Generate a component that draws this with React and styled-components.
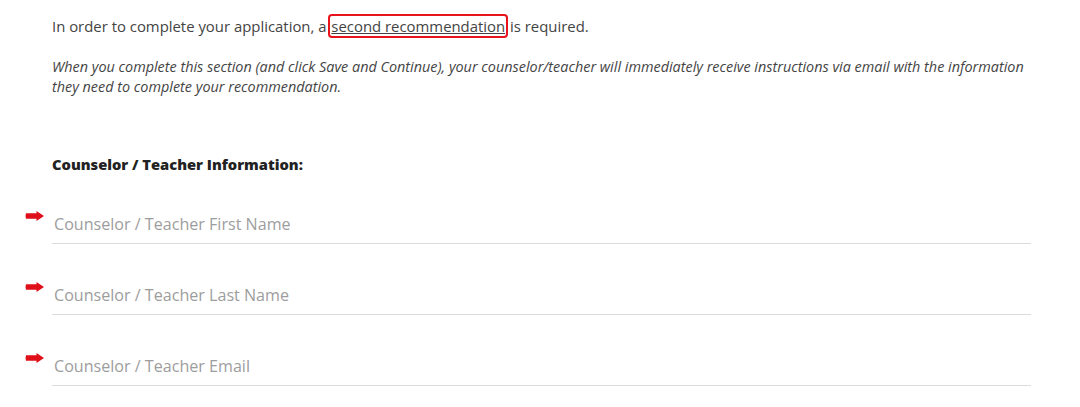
import styled, { createGlobalStyle } from "styled-components";

const GlobalStyle = createGlobalStyle`
  body {
    margin: 0;
    background: #fff;
    font-family: "Open Sans", "Liberation Sans", sans-serif;
    color: #444;
  }
`;

const Page = styled.div`
  padding: 16px 0 0 25px;
  width: 1006px;
`;

const Intro = styled.p`
  margin: 0 0 21px 27px;
  font-size: 14.9px;
  line-height: 20px;
`;

const RecLink = styled.a`
  color: #444;
  text-decoration: underline;
  outline: 2px solid #e8131b;
  outline-offset: 0;
  border-radius: 2px;
  padding: 0 1px;
`;

const Note = styled.p`
  margin: 0 0 57px 27px;
  font-size: 14.4px;
  line-height: 20px;
  font-style: italic;
`;

const Heading = styled.h4`
  margin: 0 0 30px 27px;
  font-size: 14.7px;
  line-height: 20px;
  font-weight: 800;
  color: #222;
`;

const FieldRow = styled.div`
  display: grid;
  grid-template-columns: 27px 1fr;
  margin-bottom: 31px;
`;

const Marker = styled.svg`
  margin-top: 7px;
`;

const Input = styled.input`
  height: 39px;
  border: none;
  border-bottom: 1px solid #dcdcdc;
  padding: 0 2px;
  font-family: inherit;
  font-size: 16.1px;
  font-weight: 400;
  color: #444;
  outline: none;
  &::placeholder {
    color: #9d9d9d;
  }
`;

const fields = [
  "Counselor / Teacher First Name",
  "Counselor / Teacher Last Name",
  "Counselor / Teacher Email",
];

function RequiredArrow() {
  return (
    <Marker width="19" height="10" viewBox="0 0 19 10">
      <path d="M1 2.2 H11.5 V0 L19 5 L11.5 10 V7.8 H1 Q0 5 1 2.2 Z" fill="#e0101a" />
    </Marker>
  );
}

export default function App() {
  return (
    <>
      <GlobalStyle />
      <Page>
        <Intro>
          In order to complete your application, a{" "}
          <RecLink href="#">second recommendation</RecLink> is required.
        </Intro>
        <Note>
          When you complete this section (and click Save and Continue), your
          counselor/teacher will immediately receive instructions via email
          with the information they need to complete your recommendation.
        </Note>
        <Heading>Counselor / Teacher Information:</Heading>
        {fields.map((f) => (
          <FieldRow key={f}>
            <RequiredArrow />
            <Input placeholder={f} />
          </FieldRow>
        ))}
      </Page>
    </>
  );
}
